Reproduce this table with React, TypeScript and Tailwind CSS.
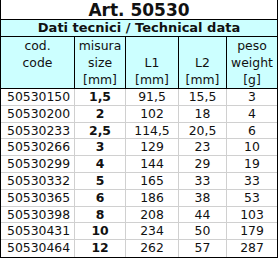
import React from "react";

const rows: [string, string, string, string, string][] = [
  ["50530150", "1,5", "91,5", "15,5", "3"],
  ["50530200", "2", "102", "18", "4"],
  ["50530233", "2,5", "114,5", "20,5", "6"],
  ["50530266", "3", "129", "23", "10"],
  ["50530299", "4", "144", "29", "19"],
  ["50530332", "5", "165", "33", "33"],
  ["50530365", "6", "186", "38", "53"],
  ["50530398", "8", "208", "44", "103"],
  ["50530431", "10", "234", "50", "179"],
  ["50530464", "12", "262", "57", "287"],
];

const font = { fontFamily: '"DejaVu Sans", Verdana, sans-serif' };

function HeadCell({ lines, last }: { lines: string[]; last?: boolean }) {
  return (
    <div className={`flex flex-col ${last ? "" : "border-r border-black"}`}>
      {lines.map((l, i) => (
        <div key={i} className="h-[17px] leading-[17px] text-center">
          {l}
        </div>
      ))}
    </div>
  );
}

export default function App() {
  return (
    <div className="bg-white w-[279px] h-[259px]" style={font}>
      <div className="w-[278px] border-l border-r border-b border-black text-[#111] text-[12.4px]">
        <div className="h-[20px] border-b border-black flex items-center justify-center font-bold text-[17px] leading-[20px]">
          Art. 50530
        </div>
        <div className="h-[17px] bg-[#ccffff] border-b border-black flex items-center justify-center font-bold text-[13px]">
          Dati tecnici / Technical data
        </div>
        <div className="grid grid-cols-[74px_51px_53px_48px_50px] bg-[#ccffff] border-b border-black">
          <HeadCell lines={["cod.", "code", ""]} />
          <HeadCell lines={["misura", "size", "[mm]"]} />
          <HeadCell lines={["", "L1", "[mm]"]} />
          <HeadCell lines={["", "L2", "[mm]"]} />
          <HeadCell lines={["peso", "weight", "[g]"]} last />
        </div>
        {rows.map((r, i) => (
          <div
            key={r[0]}
            className={`grid grid-cols-[74px_51px_53px_48px_50px] h-[16.8px] leading-[16px] ${
              i < rows.length - 1 ? "border-b border-[#d0d0d0]" : ""
            }`}
          >
            <div className="pl-[6px] border-r border-[#d0d0d0]">{r[0]}</div>
            <div className="text-center font-bold border-r border-[#d0d0d0]">{r[1]}</div>
            <div className="text-center border-r border-[#d0d0d0]">{r[2]}</div>
            <div className="text-center border-r border-[#d0d0d0]">{r[3]}</div>
            <div className="text-center">{r[4]}</div>
          </div>
        ))}
      </div>
    </div>
  );
}
